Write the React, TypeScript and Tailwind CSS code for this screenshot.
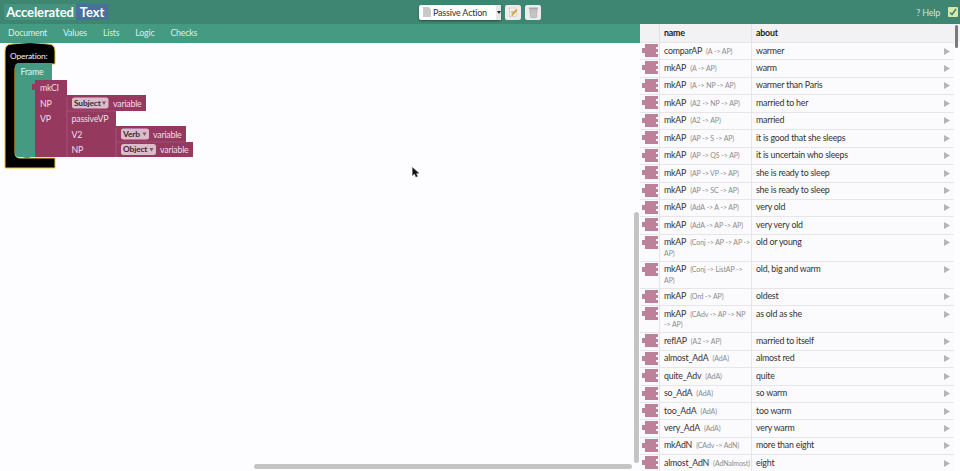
const FONT = 'Lato, "Noto Sans", sans-serif';

type Row = { n: string; t: string; a: string; tall?: boolean };

const rows: Row[] = [
  { n: "comparAP", t: "(A -> AP)", a: "warmer" },
  { n: "mkAP", t: "(A -> AP)", a: "warm" },
  { n: "mkAP", t: "(A -> NP -> AP)", a: "warmer than Paris" },
  { n: "mkAP", t: "(A2 -> NP -> AP)", a: "married to her" },
  { n: "mkAP", t: "(A2 -> AP)", a: "married" },
  { n: "mkAP", t: "(AP -> S -> AP)", a: "it is good that she sleeps" },
  { n: "mkAP", t: "(AP -> QS -> AP)", a: "it is uncertain who sleeps" },
  { n: "mkAP", t: "(AP -> VP -> AP)", a: "she is ready to sleep" },
  { n: "mkAP", t: "(AP -> SC -> AP)", a: "she is ready to sleep" },
  { n: "mkAP", t: "(AdA -> A -> AP)", a: "very old" },
  { n: "mkAP", t: "(AdA -> AP -> AP)", a: "very very old" },
  { n: "mkAP", t: "(Conj -> AP -> AP -> AP)", a: "old or young", tall: true },
  { n: "mkAP", t: "(Conj -> ListAP -> AP)", a: "old, big and warm", tall: true },
  { n: "mkAP", t: "(Ord -> AP)", a: "oldest" },
  { n: "mkAP", t: "(CAdv -> AP -> NP -> AP)", a: "as old as she", tall: true },
  { n: "reflAP", t: "(A2 -> AP)", a: "married to itself" },
  { n: "almost_AdA", t: "(AdA)", a: "almost red" },
  { n: "quite_Adv", t: "(AdA)", a: "quite" },
  { n: "so_AdA", t: "(AdA)", a: "so warm" },
  { n: "too_AdA", t: "(AdA)", a: "too warm" },
  { n: "very_AdA", t: "(AdA)", a: "very warm" },
  { n: "mkAdN", t: "(CAdv -> AdN)", a: "more than eight" },
  { n: "almost_AdN", t: "(AdNalmost)", a: "eight" },
];

function Puzzle() {
  return (
    <svg width="16" height="13" viewBox="0 0 16 13" className="shrink-0">
      <path d="M3 0H16V3H14V5H16V8H14V10H16V13H3V9H0V4H3Z" fill="#bd8299" />
    </svg>
  );
}

function Tri() {
  return (
    <svg width="6" height="7" viewBox="0 0 6 7" className="shrink-0">
      <path d="M0 0L6 3.5L0 7Z" fill="#b4b4b4" />
    </svg>
  );
}

function Pill({ x, y, w, label }: { x: number; y: number; w: number; label: string }) {
  return (
    <g>
      <rect x={x} y={y} width={w} height={11} rx={2.5} fill="#dcbccb" />
      <text x={x + 2} y={y + 8.4} fontSize="8.4" fontWeight="700" letterSpacing="-0.15" fill="#3a2a33">
        {label}
      </text>
      <path d={`M${x + w - 6.5} ${y + 4}h4l-2 3.5z`} fill="#8e4a68" />
    </g>
  );
}

function Blocks() {
  const m = "#95395f";
  return (
    <svg width="200" height="130" viewBox="0 43 200 130" fontFamily={FONT} letterSpacing="-0.2" className="block">
      <path
        d="M5 51Q5 44 12 44Q30 41 48 44Q55 44 55 51V64H29l-2 2-2-2H20Q15 64 15 69V153Q15 158 20 158H55V168H5Z"
        fill="#000"
        stroke="#f2c230"
        strokeWidth="1"
      />
      <text x="10" y="59" fontSize="8.4" fill="#f2f2f2">Operation:</text>
      <path d="M19 63H52V80H35V157H31l-4 1.5L23 157H19Q15 157 15 153V67Q15 63 19 63Z" fill="#459a82" />
      <text x="20.5" y="75" fontSize="8.8" fill="#e8f4f0">Frame</text>

      <path d="M35 80H67V157H35V90H32V84H35Z" fill={m} />
      <rect x="67" y="95" width="79" height="16" fill={m} />
      <rect x="67" y="111" width="49" height="46" fill={m} />
      <rect x="116" y="126" width="70" height="16" fill={m} />
      <rect x="116" y="142" width="77" height="15" fill={m} />
      <path d="M67 97V157M116 128V157" stroke="#b3678a" strokeWidth="0.6" fill="none" />
      <path d="M67 111H116M116 142H186" stroke="#b3678a" strokeWidth="0.5" fill="none" />

      <g fontSize="8.8" fill="#f0dfe6">
        <text x="40" y="91">mkCl</text>
        <text x="40" y="106.5">NP</text>
        <text x="40" y="122">VP</text>
        <text x="71.5" y="122">passiveVP</text>
        <text x="71.5" y="137.5">V2</text>
        <text x="71.5" y="153">NP</text>
        <text x="113" y="106.5">variable</text>
        <text x="153" y="137.5">variable</text>
        <text x="160" y="153">variable</text>
      </g>
      <Pill x={72} y={97.5} w={36.5} label="Subject" />
      <Pill x={121} y={128.5} w={28} label="Verb" />
      <Pill x={121} y={144} w={35} label="Object" />
    </svg>
  );
}

function Cursor() {
  return (
    <svg width="8" height="11" viewBox="0 0 8 11" className="absolute left-[412px] top-[143px]">
      <path d="M0.5 0.5V8.5L2.5 6.8L4 10L5.5 9.3L4.2 6.2H7Z" fill="#111" stroke="#555" strokeWidth="0.5" />
    </svg>
  );
}

function DocIcon() {
  return (
    <svg width="8" height="10" viewBox="0 0 8 10" className="shrink-0">
      <path d="M0 0H5.5L8 2.5V10H0Z" fill="#c9c9c9" />
    </svg>
  );
}

export default function App() {
  return (
    <div
      className="relative flex h-[471px] w-[960px] flex-col overflow-hidden bg-[#fdfcfe] tracking-[-0.2px]"
      style={{ fontFamily: FONT }}
    >
      <header className="flex h-6 shrink-0 items-center bg-[#3e8671]">
        <div className="ml-1 flex h-4 items-center font-bold text-white">
          <span className="flex h-4 w-[72px] items-center justify-center bg-[#46937d] text-[13px] leading-none tracking-[-0.1px]">Accelerated</span>
          <span className="flex h-4 w-8 items-center justify-center bg-[#47709a] text-[13px] leading-none tracking-[-0.1px]">Text</span>
        </div>
        <div className="ml-[311px] flex h-[15px] w-[82px] items-center rounded-[2px] bg-white pl-1 shadow-[0_1px_2px_rgba(0,0,0,0.4)]">
          <DocIcon />
          <span className="ml-[2px] text-[9px] leading-none whitespace-nowrap text-[#333]">Passive Action</span>
          <span className="ml-auto flex h-full w-[5px] items-center justify-center bg-[#e8e8e8]">
            <svg width="4" height="3" viewBox="0 0 4 3"><path d="M0 0H4L2 3Z" fill="#222" /></svg>
          </span>
        </div>
        <button className="ml-1 flex h-[15px] w-4 items-center justify-center rounded-[2px] bg-[#ececec]">
          <svg width="9" height="10" viewBox="0 0 9 10">
            <rect x="0.5" y="1" width="7" height="8.5" fill="#f5f0dc" stroke="#bbb" strokeWidth="0.5" />
            <path d="M2 8L7 2L8.5 3.2L3.5 9Z" fill="#e0a030" />
            <path d="M2 5H5" stroke="#7aa0c0" />
          </svg>
        </button>
        <button className="ml-1 flex h-[15px] w-4 items-center justify-center rounded-[2px] bg-[#ececec]">
          <svg width="9" height="11" viewBox="0 0 9 11">
            <rect x="0" y="0.5" width="9" height="2" fill="#a8a8a8" />
            <path d="M1 3H8L7.3 10.5H1.7Z" fill="#c4c4c4" stroke="#9a9a9a" strokeWidth="0.5" />
          </svg>
        </button>
        <span className="ml-auto text-[9px] leading-none text-[#cfe5dd]">? Help</span>
        <span className="ml-2 mr-[2px] flex h-[10px] w-[10px] items-center justify-center rounded-[1px] bg-[#d8e8a8]">
          <svg width="8" height="8" viewBox="0 0 8 8"><path d="M1 4.5L3 6.5L7 1" stroke="#3e8671" strokeWidth="1.5" fill="none" /></svg>
        </span>
      </header>

      <div className="flex min-h-0 flex-1">
        <main className="relative flex w-[640px] shrink-0 flex-col">
          <nav className="flex h-[19px] shrink-0 items-center gap-4 bg-[#459a82] pl-2 text-[8.8px] leading-none text-[#dcefe8]">
            <span>Document</span>
            <span>Values</span>
            <span>Lists</span>
            <span>Logic</span>
            <span>Checks</span>
          </nav>
          <div className="min-h-0 flex-1">
            <Blocks />
          </div>
          <Cursor />
          <div className="absolute left-[634px] top-[188px] h-[251px] w-[5px] rounded-full bg-[#c4c4c4]" />
          <div className="absolute left-[254px] top-[440px] h-[5px] w-[378px] rounded-full bg-[#c4c4c4]" />
        </main>

        <aside className="relative flex min-w-0 flex-1 flex-col text-[8.8px] leading-[10.5px] text-[#333]">
          <div className="flex h-[18px] shrink-0 bg-[#f2f2f4] font-bold text-[#222]">
            <div className="w-5 shrink-0 border-r border-[#e2e2e4]" />
            <div className="flex w-[92px] shrink-0 items-center border-r border-[#e2e2e4] pl-[4px]">name</div>
            <div className="flex w-[202px] shrink-0 items-center pl-[4px]">about</div>
          </div>
          {rows.map((r, i) => (
            <div
              key={i}
              className={
                "flex w-[314px] shrink-0 border-t border-[#e6e6e8] bg-[#fbfafc] " +
                (r.tall ? "h-[27px]" : "h-[17.45px]")
              }
            >
              <div className="flex w-5 shrink-0 justify-center border-r border-[#e6e6e8] pt-[1px]">
                <Puzzle />
              </div>
              <div className="w-[92px] shrink-0 border-r border-[#e6e6e8] pl-[4px] pt-[2.5px]">
                {r.n}
                <span className="ml-[4px] text-[7px] tracking-[-0.1px] text-[#8d8d8d]">{r.t.replace(/->/g, "-\u2060>")}</span>
              </div>
              <div className="flex w-[202px] shrink-0 justify-between pl-[4px] pr-[4px] pt-[2.5px]">
                <span>{r.a}</span>
                <span className="pt-[2px]"><Tri /></span>
              </div>
            </div>
          ))}
          <div className="absolute right-[2px] top-px h-[23px] w-[3px] rounded-full bg-[#7a7a7a]" />
        </aside>
      </div>
    </div>
  );
}
